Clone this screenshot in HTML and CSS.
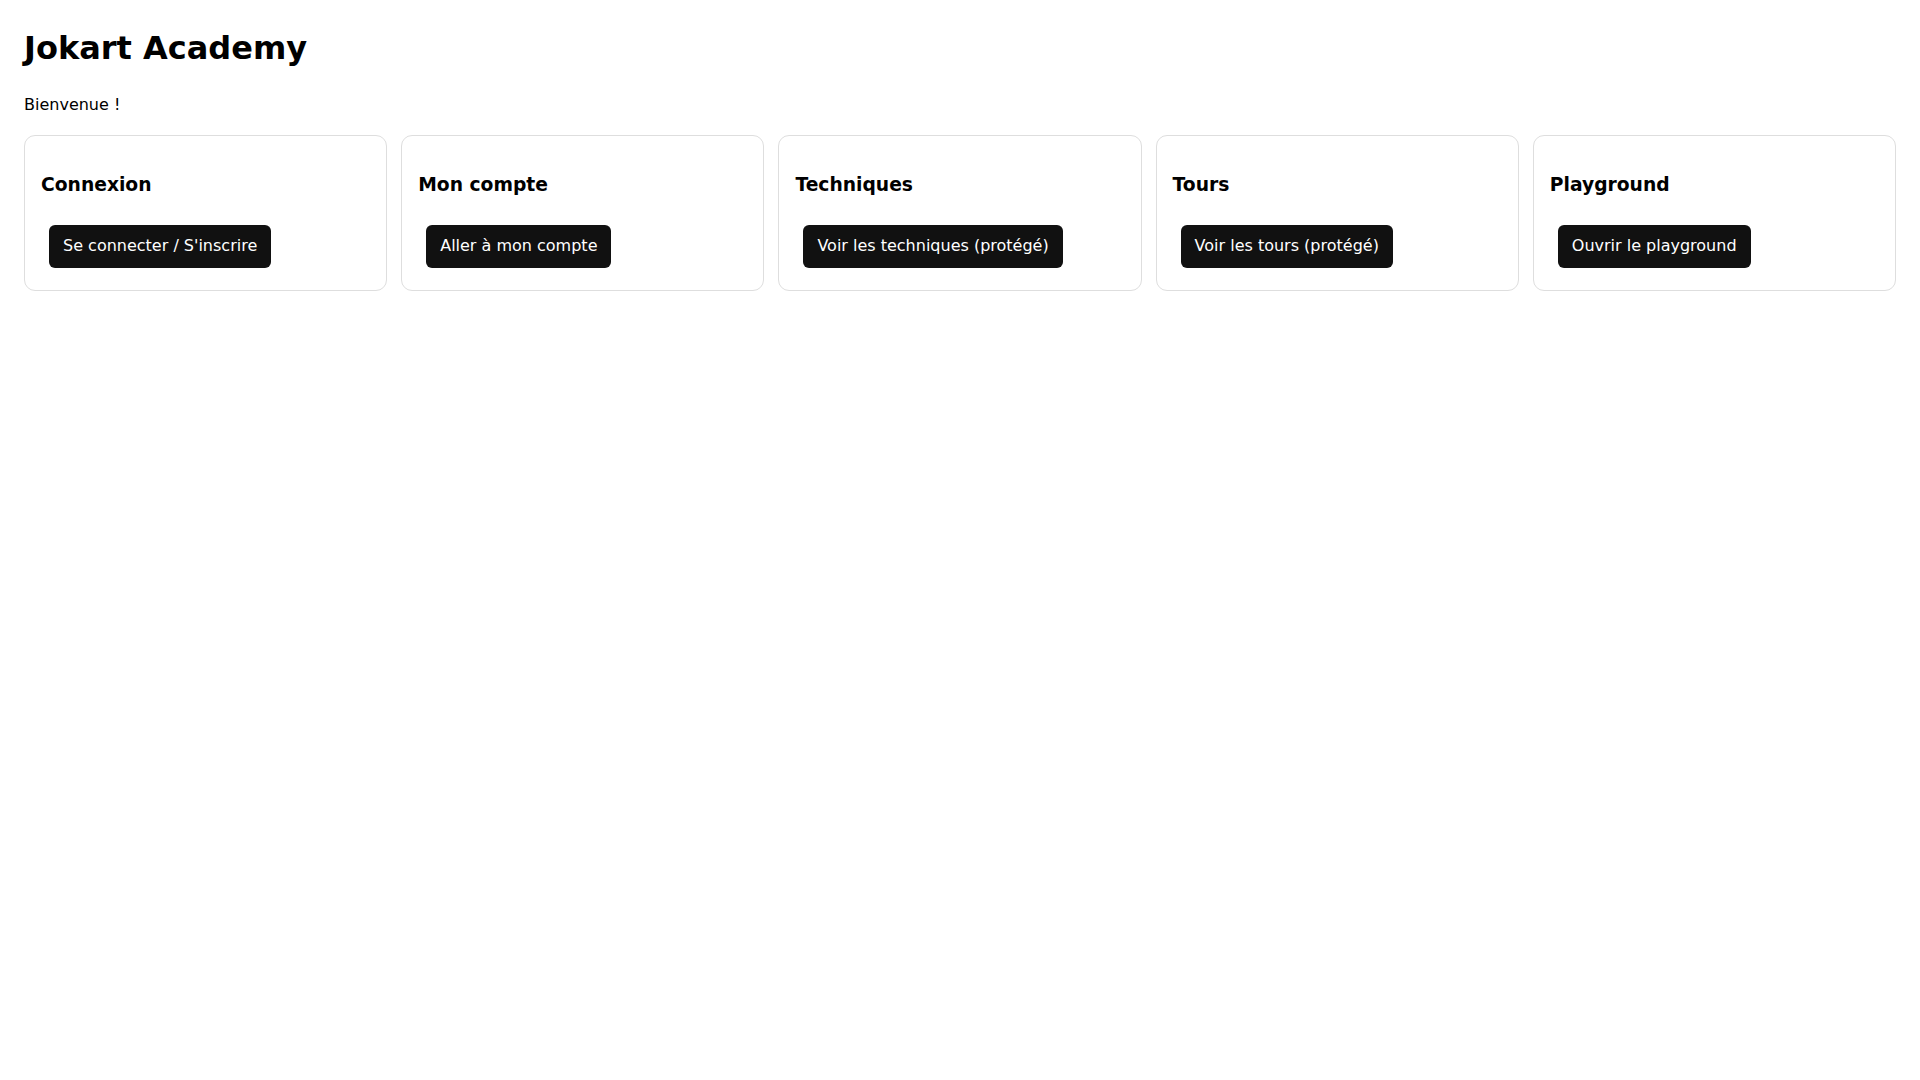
FILE: index.html
```html
<!DOCTYPE html>
<html lang="fr">
<head>
<meta charset="utf-8">
<title>Jokart Academy</title>
<link rel="stylesheet" href="styles.css">
</head>
<body>
<main class="page">
  <h1 class="title">Jokart Academy</h1>
  <p class="welcome">Bienvenue !</p>
  <section class="cards">
    <div class="card">
      <h3 class="card-title">Connexion</h3>
      <div class="card-actions"><a class="btn" href="#">Se connecter / S'inscrire</a></div>
    </div>
    <div class="card">
      <h3 class="card-title">Mon compte</h3>
      <div class="card-actions"><a class="btn" href="#">Aller à mon compte</a></div>
    </div>
    <div class="card">
      <h3 class="card-title">Techniques</h3>
      <div class="card-actions"><a class="btn" href="#">Voir les techniques (protégé)</a></div>
    </div>
    <div class="card">
      <h3 class="card-title">Tours</h3>
      <div class="card-actions"><a class="btn" href="#">Voir les tours (protégé)</a></div>
    </div>
    <div class="card">
      <h3 class="card-title">Playground</h3>
      <div class="card-actions"><a class="btn" href="#">Ouvrir le playground</a></div>
    </div>
  </section>
</main>
</body>
</html>
```
FILE: styles.css
```css
html, body {
  margin: 0;
  padding: 0;
  background: #ffffff;
}
body {
  font-family: "DejaVu Sans", sans-serif;
  font-size: 16px;
  color: #000;
}
.page {
  padding: 24px;
}
.title {
  font-size: 32px;
  font-weight: bold;
  line-height: 37px;
  margin: 6px 0 0;
}
.welcome {
  margin: 27.5px 0 0;
  font-size: 16px;
}
.cards {
  display: grid;
  grid-template-columns: repeat(5, 1fr);
  gap: 14px;
  margin-top: 21.5px;
}
.card {
  border: 1px solid #dedede;
  border-radius: 11px;
  padding: 16px;
}
.card-title {
  font-size: 18.72px;
  font-weight: bold;
  margin: 22.4px 0 0;
}
.card-actions {
  margin-top: 21.5px;
}
.btn {
  display: inline-block;
  margin: 8px 8px 6px;
  padding: 11px 14px 13px;
  line-height: 19.5px;
  background: #111111;
  color: #ffffff;
  text-decoration: none;
  border-radius: 6px;
  font-size: 16px;
}
```
